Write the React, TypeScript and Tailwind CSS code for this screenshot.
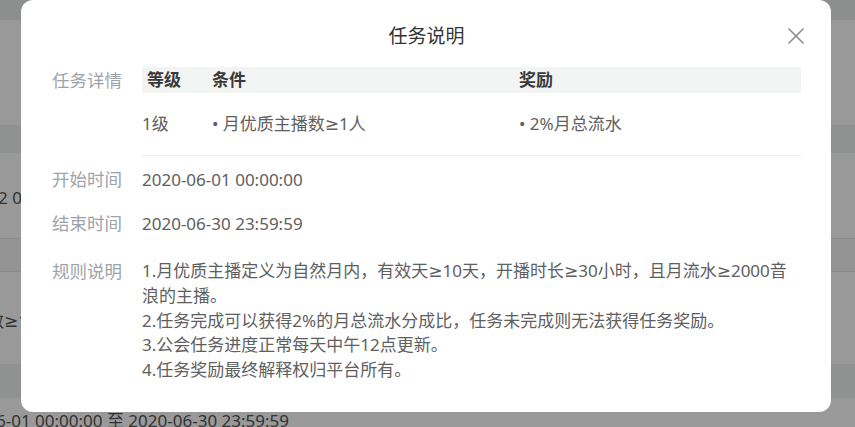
import React from 'react';

const font = 'font-["Noto_Sans","DejaVu_Sans","Noto_Sans_CJK_SC",sans-serif]';

const rules = [
  '1.月优质主播定义为自然月内，有效天≥10天，开播时长≥30小时，且月流水≥2000音浪的主播。',
  '2.任务完成可以获得2%的月总流水分成比，任务未完成则无法获得任务奖励。',
  '3.公会任务进度正常每天中午12点更新。',
  '4.任务奖励最终解释权归平台所有。',
];

// page behind the dialog, only the edges show
const BackgroundPage = () => (
  <div className="flex flex-col text-[17px] text-[#555]">
    <div className="h-[20px] bg-[#eceeee]" />
    <div className="h-[105px] bg-white" />
    <div className="h-[28px] bg-[#f1f2f2]" />
    <div className="flex h-[86px] items-center border-b border-[#e6e6e6] bg-white">
      <span className="-ml-[2px] pt-[4px]">2 00:00:00</span>
    </div>
    <div className="h-[33px] border-b border-[#e6e6e6] bg-[#f7f7f7]" />
    <div className="flex h-[92px] items-start bg-white pt-[36px]">
      <span className="-ml-[13px]">数≥1人</span>
    </div>
    <div className="h-[34px] bg-[#f1f2f2]" />
    <div className="flex h-[40px] items-start bg-white pt-[10px]">
      <span className="-ml-[4px]">6-01 00:00:00 至 2020-06-30 23:59:59</span>
    </div>
  </div>
);

const CloseIcon = () => (
  <svg width="16" height="16" viewBox="0 0 16 16" fill="none" stroke="#8a8a8a" strokeWidth="1.6" strokeLinecap="round">
    <path d="M1 1 L15 15" />
    <path d="M15 1 L1 15" />
  </svg>
);

const Label = ({ children }: { children: React.ReactNode }) => (
  <div className="w-[90px] shrink-0 text-[17.5px] text-[#9ea3a9]">{children}</div>
);

const App = () => {
  return (
    <div className={`relative h-[427px] w-[855px] overflow-hidden bg-white ${font}`}>
      <BackgroundPage />
      <div className="absolute inset-0 bg-black/40" />

      <div className="absolute left-[21px] top-0 h-[412px] w-[810px] rounded-[12px] bg-white pl-[31px] pr-[30px] text-[17px] text-[#606060]">
        <div className="mt-[26px] text-center text-[19px] leading-[20px] text-[#333]">任务说明</div>
        <button className="absolute right-[27px] top-[28px]">
          <CloseIcon />
        </button>

        {/* 任务详情 */}
        <div className="mt-[21px] flex">
          <Label>
            <div className="leading-[26px]">任务详情</div>
          </Label>
          <div className="flex-1">
            <div className="grid h-[26px] grid-cols-[70px_307px_1fr] items-center bg-[#f2f3f3] font-bold leading-[26px] text-[#3a3a3a]">
              <div className="pl-[5px]">等级</div>
              <div>条件</div>
              <div>奖励</div>
            </div>
            <div className="grid h-[63px] grid-cols-[70px_307px_1fr] items-center border-b border-[#ececec]">
              <div>1级</div>
              <div>• 月优质主播数≥1人</div>
              <div>• 2%月总流水</div>
            </div>
          </div>
        </div>

        <div className="mt-[11px] flex leading-[25px]">
          <Label>开始时间</Label>
          <div>2020-06-01 00:00:00</div>
        </div>

        <div className="mt-[19px] flex leading-[25px]">
          <Label>结束时间</Label>
          <div>2020-06-30 23:59:59</div>
        </div>

        <div className="mt-[23px] flex leading-[24.8px]">
          <Label>规则说明</Label>
          <div className="flex-1">
            {rules.map((r) => (
              <div key={r}>{r}</div>
            ))}
          </div>
        </div>
      </div>
    </div>
  );
};

export default App;
